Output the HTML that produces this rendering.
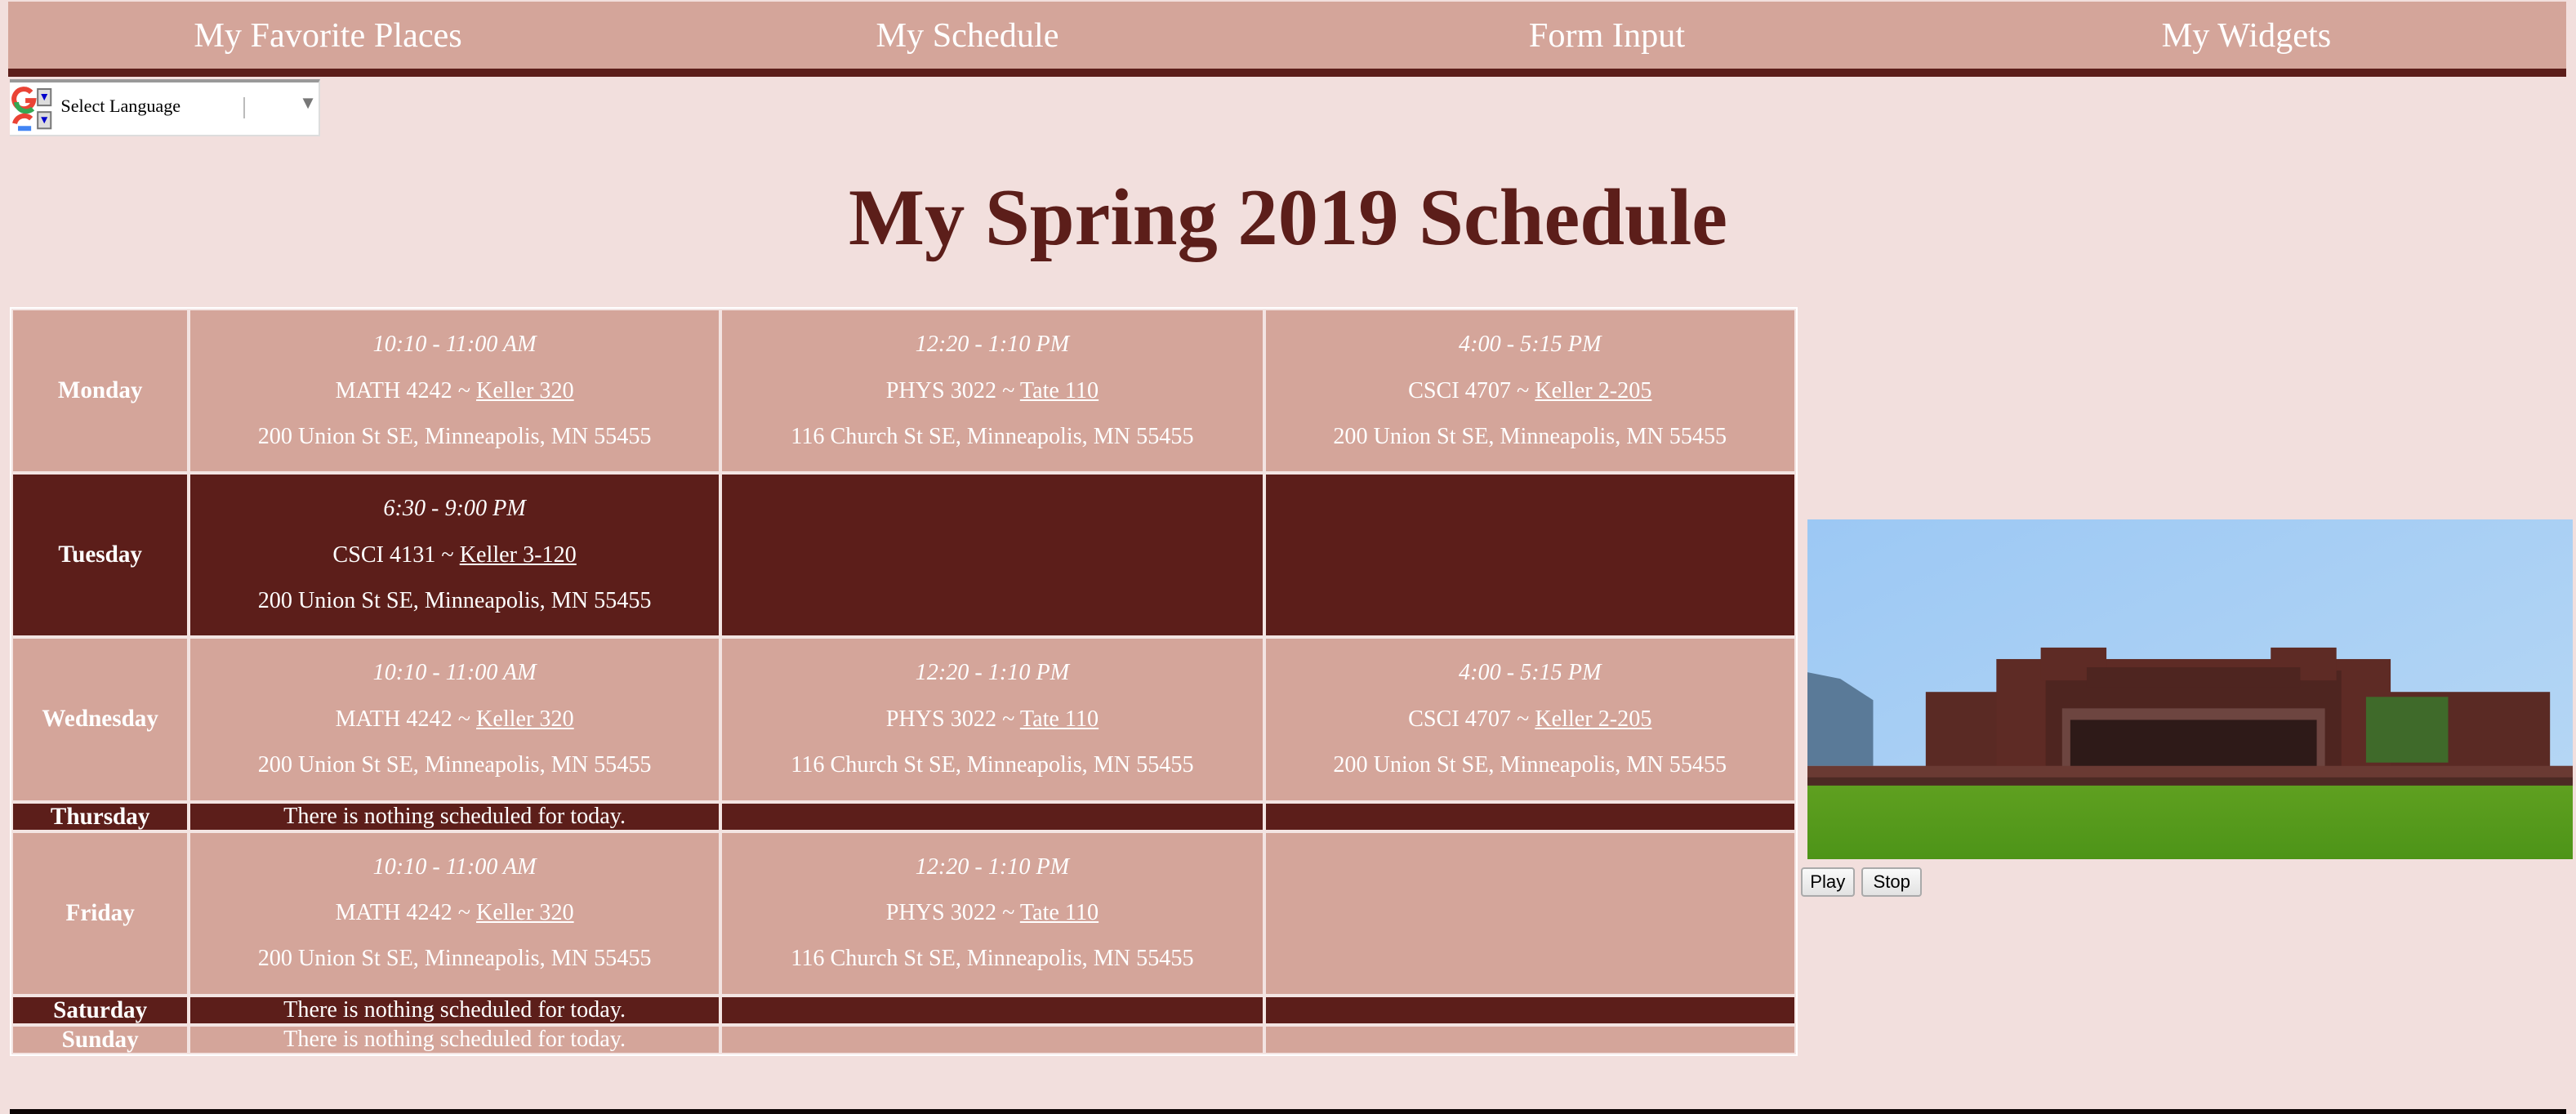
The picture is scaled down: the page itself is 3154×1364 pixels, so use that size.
<!DOCTYPE html>
<html><head><meta charset="utf-8">
<style>
html,body{margin:0;padding:0;}
html{background:#f2dfdd;width:3154px;height:1363px;overflow:hidden;}
body{zoom:2.0115;width:1568px;height:678px;position:relative;font-family:"Liberation Serif",serif;background:#f2dfdd;}
.nav{position:absolute;left:5px;top:1px;width:1557px;height:41px;background:#d4a59a;border-bottom:5px solid #5c1e1a;display:flex;}
.nav div{flex:1;text-align:center;color:#fff;font-size:21px;line-height:42px;}
.lang{position:absolute;left:6px;top:48px;width:188px;height:32px;background:#fff;border-top:2px solid #999;border-right:1px solid #ddd;border-bottom:1px solid #ddd;}
.lang .t{position:absolute;left:31px;top:8px;font-size:11px;color:#000;}
.lang .d{position:absolute;left:142px;top:9px;width:1px;height:13px;background:#bbb;}
.lang .a{position:absolute;left:176px;top:6px;font-size:11px;color:#777;}
h1{position:absolute;left:0;width:1568px;top:106px;margin:0;text-align:center;font-size:49px;font-weight:bold;color:#5c1e1a;line-height:54px;}
table{position:absolute;left:6px;top:187px;border-collapse:separate;border-spacing:0;border:1px solid #fff;width:1088px;}
td{border:1px solid #f3e4e2;color:#fff;text-align:center;font-size:14px;padding:0;vertical-align:middle;}
td.day{font-weight:bold;width:106px;font-size:14.5px;}
tr.l td{background:#d4a59a;}
tr.d td{background:#5c1e1a;}
.c{line-height:28px;}
.c i{display:block;}
u{text-decoration:underline;}
tr.s td{height:16px;line-height:16px;}
tr.b td{height:98px;}
.img{position:absolute;left:1100px;top:316px;width:466px;height:207px;}
.btn{position:absolute;top:528px;height:16px;font-family:"Liberation Sans",sans-serif;font-size:11px;line-height:16px;background:linear-gradient(#fafafa,#e2e2e2);border:1px solid #aaa;border-radius:2px;text-align:center;color:#000;}
.line{position:absolute;left:6px;top:675px;width:1556px;height:3px;background:#0c0404;}
</style></head><body>
<div class="nav"><div>My Favorite Places</div><div>My Schedule</div><div>Form Input</div><div>My Widgets</div></div>
<div class="lang">
<svg style="position:absolute;left:1px;top:2px" width="28" height="28" viewBox="0 0 28 28">
<path d="M12 4a6 6 0 1 0 1.5 5h-5" fill="none" stroke="#ea4335" stroke-width="3"/>
<path d="M3 10a6 6 0 0 0 10 4" fill="none" stroke="#34a853" stroke-width="3"/>
<rect x="16" y="2" width="8" height="10" fill="#ddd" stroke="#777"/><path d="M18 5h4l-2 4z" fill="#00c"/>
<path d="M12 20a6 6 0 0 0-10 3" fill="none" stroke="#ea4335" stroke-width="3"/>
<path d="M4 26h8" stroke="#4285f4" stroke-width="3"/>
<rect x="16" y="16" width="8" height="10" fill="#ddd" stroke="#777"/><path d="M18 19h4l-2 4z" fill="#00c"/>
</svg>
<span class="t">Select Language</span><span class="d"></span><span class="a">▼</span></div>
<h1>My Spring 2019 Schedule</h1>
<table>
<tr class="l b"><td class="day">Monday</td>
<td class="c"><i>10:10 - 11:00 AM</i><div>MATH 4242 ~ <u>Keller 320</u></div><div>200 Union St SE, Minneapolis, MN 55455</div></td>
<td class="c"><i>12:20 - 1:10 PM</i><div>PHYS 3022 ~ <u>Tate 110</u></div><div>116 Church St SE, Minneapolis, MN 55455</div></td>
<td class="c"><i>4:00 - 5:15 PM</i><div>CSCI 4707 ~ <u>Keller 2-205</u></div><div>200 Union St SE, Minneapolis, MN 55455</div></td></tr>
<tr class="d b"><td class="day">Tuesday</td>
<td class="c"><i>6:30 - 9:00 PM</i><div>CSCI 4131 ~ <u>Keller 3-120</u></div><div>200 Union St SE, Minneapolis, MN 55455</div></td><td></td><td></td></tr>
<tr class="l b"><td class="day">Wednesday</td>
<td class="c"><i>10:10 - 11:00 AM</i><div>MATH 4242 ~ <u>Keller 320</u></div><div>200 Union St SE, Minneapolis, MN 55455</div></td>
<td class="c"><i>12:20 - 1:10 PM</i><div>PHYS 3022 ~ <u>Tate 110</u></div><div>116 Church St SE, Minneapolis, MN 55455</div></td>
<td class="c"><i>4:00 - 5:15 PM</i><div>CSCI 4707 ~ <u>Keller 2-205</u></div><div>200 Union St SE, Minneapolis, MN 55455</div></td></tr>
<tr class="d s"><td class="day">Thursday</td><td>There is nothing scheduled for today.</td><td></td><td></td></tr>
<tr class="l b"><td class="day">Friday</td>
<td class="c"><i>10:10 - 11:00 AM</i><div>MATH 4242 ~ <u>Keller 320</u></div><div>200 Union St SE, Minneapolis, MN 55455</div></td>
<td class="c"><i>12:20 - 1:10 PM</i><div>PHYS 3022 ~ <u>Tate 110</u></div><div>116 Church St SE, Minneapolis, MN 55455</div></td><td></td></tr>
<tr class="d s"><td class="day">Saturday</td><td>There is nothing scheduled for today.</td><td></td><td></td></tr>
<tr class="l s"><td class="day">Sunday</td><td>There is nothing scheduled for today.</td><td></td><td></td></tr>
</table>
<svg class="img" viewBox="0 0 466 207" preserveAspectRatio="none">
<defs><linearGradient id="sky" x1="0" y1="0" x2="1" y2="1"><stop offset="0" stop-color="#9cc8f4"/><stop offset="1" stop-color="#b8d8f4"/></linearGradient>
<linearGradient id="g" x1="0" y1="0" x2="0" y2="1"><stop offset="0" stop-color="#5fa020"/><stop offset="1" stop-color="#4d9418"/></linearGradient></defs>
<rect width="466" height="207" fill="url(#sky)"/>
<path d="M0 93 L20 97 L40 110 L40 150 L0 150Z" fill="#5a7a98"/>
<rect x="72" y="105" width="380" height="50" fill="#5a2a24"/>
<rect x="115" y="85" width="240" height="70" fill="#5e2b25"/>
<rect x="145" y="92" width="180" height="65" fill="#4e2520"/>
<rect x="142" y="78" width="40" height="20" fill="#5e2b25"/><rect x="282" y="78" width="40" height="20" fill="#5e2b25"/>
<rect x="170" y="90" width="130" height="12" fill="#4e2520"/>
<rect x="155" y="115" width="160" height="42" fill="#6d4540"/>
<rect x="160" y="122" width="150" height="30" fill="#2e1a18"/>
<rect x="340" y="108" width="50" height="40" fill="#3f6a2a"/>
<rect x="0" y="150" width="466" height="10" fill="#6a3a33"/>
<rect x="0" y="157" width="466" height="6" fill="#4c2a24"/>
<rect x="0" y="162" width="466" height="45" fill="url(#g)"/>
</svg>
<div class="btn" style="left:1096px;width:31px">Play</div>
<div class="btn" style="left:1133px;width:35px">Stop</div>
<div class="line"></div>
</body></html>
